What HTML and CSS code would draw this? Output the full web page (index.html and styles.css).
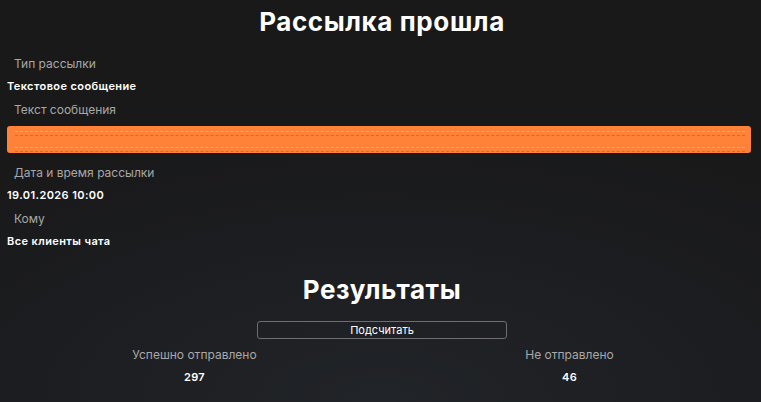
FILE: index.html
```html
<!DOCTYPE html>
<html lang="ru">
<head>
<meta charset="utf-8">
<link rel="stylesheet" href="styles.css">
</head>
<body>
<div class="page">
  <h1 class="title">Рассылка прошла</h1>
  <div class="field">
    <div class="label">Тип рассылки</div>
    <div class="value">Текстовое сообщение</div>
  </div>
  <div class="field">
    <div class="label">Текст сообщения</div>
    <div class="redacted">
      <div class="rline"></div>
      <div class="rline"></div>
    </div>
  </div>
  <div class="field">
    <div class="label">Дата и время рассылки</div>
    <div class="value">19.01.2026 10:00</div>
  </div>
  <div class="field">
    <div class="label">Кому</div>
    <div class="value">Все клиенты чата</div>
  </div>
  <h2 class="title results">Результаты</h2>
  <div class="btn-row"><button class="btn">Подсчитать</button></div>
  <div class="stats">
    <div class="stat">
      <div class="stat-label">Успешно отправлено</div>
      <div class="stat-value">297</div>
    </div>
    <div class="stat">
      <div class="stat-label">Не отправлено</div>
      <div class="stat-value">46</div>
    </div>
  </div>
</div>
</body>
</html>
```
FILE: styles.css
```css
html, body {
  margin: 0;
  height: 100%;
}
body {
  background: radial-gradient(ellipse 80% 70% at 50% 100%, #212428 0%, #1c1d20 60%, #19191a 100%);
  background-color: #19191a;
  color: #fff;
  font-family: "Inter", "Open Sans", sans-serif;
  overflow: hidden;
}
.page {
  width: 750px;
  padding: 0 4px 0 7px;
  display: flex;
  flex-direction: column;
}
.title {
  margin: 0;
  text-align: center;
  font-size: 26px;
  font-weight: 700;
  letter-spacing: 0.6px;
  line-height: 44px;
  height: 44px;
}
h1.title {
  margin-bottom: 7.5px;
}
.field {
  display: flex;
  flex-direction: column;
}
.label {
  padding-left: 7px;
  font-size: 12px;
  color: #a8a8a8;
  line-height: 23px;
  height: 23px;
}
.value {
  font-size: 11px;
  font-weight: 600;
  letter-spacing: 0.4px;
  line-height: 23px;
  height: 23px;
}
.redacted {
  margin-top: 5.5px;
  margin-bottom: 7.5px;
  width: 744px;
  height: 27px;
  background: #ff8238;
  border-radius: 3px;
  box-sizing: border-box;
  padding: 5px 6px 0 8px;
  display: flex;
  flex-direction: column;
  gap: 11px;
}
.rline {
  height: 3px;
  border-top: 1px dashed rgba(255, 225, 200, 0.35);
  border-bottom: 1px dashed rgba(190, 70, 10, 0.45);
}
.results {
  margin-top: 15px;
  margin-bottom: 9px;
}
.btn-row {
  display: flex;
  justify-content: center;
}
.btn {
  width: 250px;
  height: 18px;
  background: transparent;
  border: 1px solid #6e6e70;
  border-radius: 3px;
  color: #fff;
  font-family: inherit;
  font-size: 11px;
  padding: 0;
  line-height: 16px;
}
.stats {
  display: grid;
  grid-template-columns: 1fr 1fr;
  margin-top: 4.5px;
}
.stat {
  text-align: center;
}
.stat-label {
  font-size: 12px;
  color: #a8a8a8;
  line-height: 23px;
  height: 23px;
}
.stat-value {
  font-size: 11px;
  font-weight: 600;
  letter-spacing: 0.4px;
  line-height: 23px;
}
```
